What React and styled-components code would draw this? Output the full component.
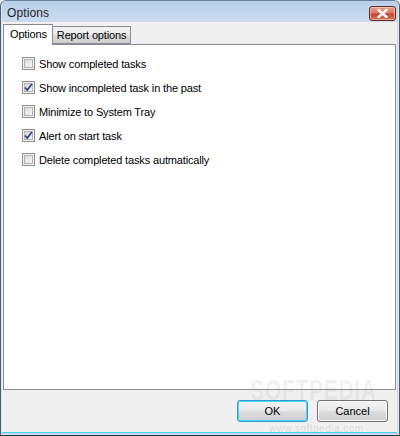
import React, { useState } from 'react';
import styled, { createGlobalStyle } from 'styled-components';

const GlobalStyle = createGlobalStyle`
  html, body {
    margin: 0;
    padding: 0;
    background: #ffffff;
  }
  body {
    font-family: Tahoma, "Liberation Sans", Arial, sans-serif;
    font-size: 11px;
  }
`;

const Window = styled.div`
  position: relative;
  width: 400px;
  height: 436px;
  box-sizing: border-box;
  display: flex;
  flex-direction: column;
  background: linear-gradient(180deg, #b8cfe8 0px, #cbdcef 22px, #c9dbee 100%);
  border: 1px solid #4d5d72;
  border-top-color: #6a7f98;
  border-bottom-color: #2c3a4a;
  border-radius: 6px 6px 0 0;
  overflow: hidden;
  box-shadow: inset 1px 0 0 #dbe8f6, inset -1px 0 0 #dbe8f6;
`;

const TitleBar = styled.div`
  height: 21px;
  display: flex;
  align-items: center;
  justify-content: space-between;
  padding: 0 3px 0 6px;
  flex-shrink: 0;
`;

const Title = styled.span`
  font-size: 12px;
  color: #1e1e1e;
  letter-spacing: 0.1px;
  padding-top: 2px;
`;

const CloseButton = styled.div`
  width: 27px;
  height: 15px;
  margin-top: 4px;
  box-sizing: border-box;
  border: 1px solid #6b2a20;
  border-radius: 3px;
  background: linear-gradient(180deg, #e8a493 0%, #d97761 45%, #c24a32 55%, #d2765a 100%);
  box-shadow: inset 0 0 0 1px rgba(255, 220, 210, 0.55);
  display: flex;
  align-items: center;
  justify-content: center;
`;

const Body = styled.div`
  flex: 1;
  margin: 0 2px 2px 1px;
  background: #f0f0f0;
  display: flex;
  flex-direction: column;
  padding-top: 1px;
  border-bottom: 1px solid #3ed0ee;
`;

const TabRow = styled.div`
  display: flex;
  align-items: flex-end;
  height: 21px;
  padding-left: 1px;
  position: relative;
  z-index: 1;
`;

const Tab = styled.div`
  box-sizing: border-box;
  height: ${(p) => (p.active ? '21px' : '18px')};
  padding: ${(p) => (p.active ? '3px 5px 0 6px' : '2px 4px 0 4px')};
  margin-bottom: ${(p) => (p.active ? '-1px' : '0')};
  margin-left: ${(p) => (p.active ? '0' : '-1px')};
  border: 1px solid #898c95;
  border-bottom: ${(p) => (p.active ? 'none' : '1px solid #898c95')};
  background: ${(p) =>
    p.active ? '#ffffff' : 'linear-gradient(180deg, #f2f2f2 0%, #ebebeb 50%, #dddddd 51%, #cfcfcf 100%)'};
  color: #000;
  font-size: 11px;
  letter-spacing: -0.15px;
  white-space: nowrap;
`;

const Panel = styled.div`
  flex: 1;
  margin: 0 1px 0 1px;
  background: #ffffff;
  border: 1px solid #898c95;
  padding: 12px 0 0 18px;
  display: flex;
  flex-direction: column;
  gap: 11px;
`;

const Row = styled.label`
  display: flex;
  align-items: center;
  height: 13px;
  gap: 4px;
  color: #000;
  font-size: 11px;
  letter-spacing: -0.15px;
  cursor: default;
`;

const Box = styled.span`
  width: 13px;
  height: 13px;
  box-sizing: border-box;
  border: 1px solid #8e8f8f;
  background: #f4f4f4;
  padding: 1px;
  display: flex;
  flex-shrink: 0;
`;

const BoxInner = styled.span`
  flex: 1;
  border: 1px solid #b3b5b8;
  background: linear-gradient(135deg, #d9dadb 0%, #eeeeee 70%, #f6f6f6 100%);
  position: relative;
`;

const CheckMark = styled.svg`
  position: absolute;
  left: -2px;
  top: -2px;
`;

const Footer = styled.div`
  height: 42px;
  flex-shrink: 0;
  display: flex;
  justify-content: flex-end;
  align-items: flex-start;
  gap: 9px;
  padding: 10px 9px 0 0;
  box-sizing: border-box;
`;

const Button = styled.button`
  width: 71px;
  height: 22px;
  box-sizing: border-box;
  border: 1px solid ${(p) => (p.primary ? '#3399cc' : '#707070')};
  border-radius: 3px;
  background: linear-gradient(180deg, #f2f2f2 0%, #ebebeb 48%, #dddddd 52%, #cfcfcf 100%);
  box-shadow: inset 0 0 0 1px ${(p) => (p.primary ? '#48d8fb' : '#fcfcfc')};
  font-family: Tahoma, "Liberation Sans", Arial, sans-serif;
  font-size: 11px;
  color: #000;
  padding: 0;
`;

const Watermark = styled.div`
  position: absolute;
  right: 22px;
  top: 374px;
  font-family: "Liberation Sans", Arial, sans-serif;
  font-weight: bold;
  font-size: 30px;
  letter-spacing: 1px;
  color: rgba(150, 150, 150, 0.13);
  pointer-events: none;
  line-height: 1;
  transform: scaleX(0.7);
  transform-origin: right center;
`;

const WatermarkSmall = styled.div`
  position: absolute;
  left: 268px;
  top: 423px;
  font-family: "Liberation Sans", Arial, sans-serif;
  font-size: 10px;
  letter-spacing: 0.5px;
  line-height: 1;
  color: rgba(120, 120, 120, 0.2);
  pointer-events: none;
`;

const options = [
  { label: 'Show completed tasks', checked: false },
  { label: 'Show incompleted task in the past', checked: true },
  { label: 'Minimize to System Tray', checked: false },
  { label: 'Alert on start task', checked: true },
  { label: 'Delete completed tasks autmatically', checked: false },
];

function Checkbox({ checked }) {
  return (
    <Box>
      <BoxInner>
        {checked && (
          <CheckMark width="11" height="11" viewBox="0 0 11 11">
            <path d="M2 5.5 L4.3 8 L8.8 2" fill="none" stroke="#2d4a8a" strokeWidth="1.8" />
          </CheckMark>
        )}
      </BoxInner>
    </Box>
  );
}

export default function App() {
  const [items, setItems] = useState(options);

  const toggle = (i) => {
    setItems((prev) => prev.map((it, idx) => (idx === i ? { ...it, checked: !it.checked } : it)));
  };

  return (
    <>
      <GlobalStyle />
      <Window>
        <TitleBar>
          <Title>Options</Title>
          <CloseButton>
            <svg width="11" height="9" viewBox="0 0 11 9">
              <path d="M1.5 1 L9.5 8 M9.5 1 L1.5 8" stroke="#ffffff" strokeWidth="2.4" strokeLinecap="square" />
            </svg>
          </CloseButton>
        </TitleBar>
        <Body>
          <TabRow>
            <Tab active>Options</Tab>
            <Tab>Report options</Tab>
          </TabRow>
          <Panel>
            {items.map((it, i) => (
              <Row key={it.label} onClick={() => toggle(i)}>
                <Checkbox checked={it.checked} />
                {it.label}
              </Row>
            ))}
          </Panel>
          <Footer>
            <Button primary>OK</Button>
            <Button>Cancel</Button>
          </Footer>
        </Body>
        <Watermark>SOFTPEDIA</Watermark>
        <WatermarkSmall>www.softpedia.com</WatermarkSmall>
      </Window>
    </>
  );
}
